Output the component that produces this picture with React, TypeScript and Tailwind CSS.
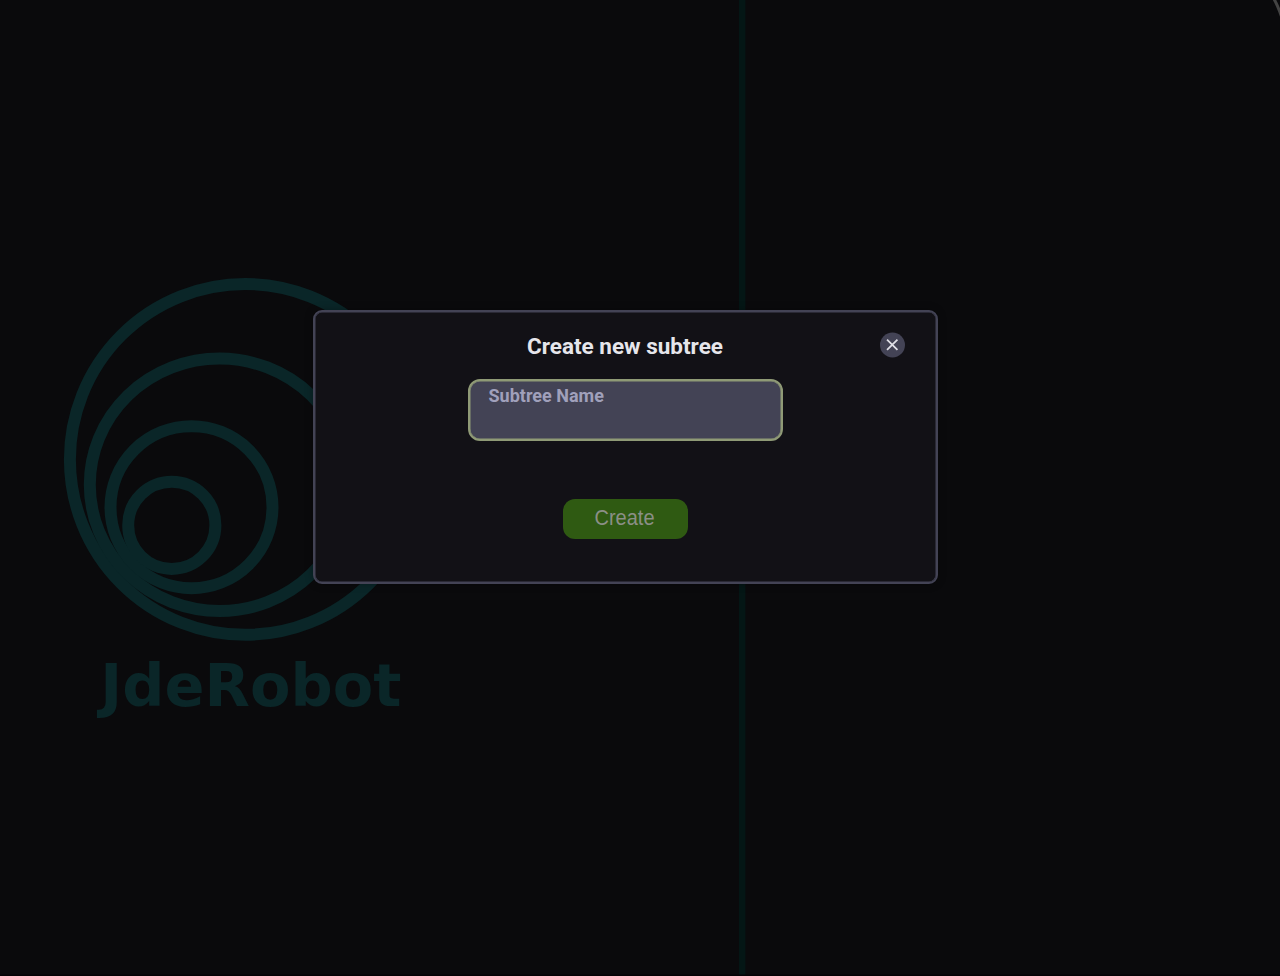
import React from "react";

function Backdrop() {
  return (
    <svg className="col-start-1 row-start-1 h-[976px] w-[1280px]" viewBox="0 0 1280 976" aria-hidden="true">
      <g fill="none" stroke="#0a2628" strokeWidth="12">
        <circle cx="245.3" cy="459.4" r="175.4" />
        <ellipse cx="219.6" cy="484.8" rx="129.8" ry="126.2" />
        <circle cx="191.5" cy="507.2" r="81" />
        <circle cx="171.8" cy="525.3" r="43.6" />
      </g>
      <text
        x="100.3"
        y="706"
        fill="#0a2628"
        fontSize="59"
        className="font-['DejaVu_Sans',sans-serif] font-bold"
      >
        JdeRobot
      </text>
      <rect x="739" y="0" width="6.4" height="976" fill="#041615" />
      <path d="M1274 -1Q1278 6 1282 18" fill="none" stroke="#434343" strokeWidth="3" />
      <rect x="0" y="974.5" width="1280" height="1.5" fill="#050306" />
    </svg>
  );
}

export default function App() {
  return (
    <main className="grid h-[976px] w-[1280px] overflow-hidden bg-[#0a0a0c]">
      <Backdrop />
      <div className="z-10 col-start-1 row-start-1 flex justify-center pt-[310px] pr-[29px]">
        <section
          role="dialog"
          aria-label="Create new subtree"
          className="flex h-[273.5px] w-[625px] flex-col items-center rounded-[9px] border-2 border-[#434355] bg-[#121116] shadow-[inset_0_0_0_0.5px_#434355,0_0_8px_rgba(0,0,0,0.3)]"
        >
          <header className="grid h-[67px] w-full grid-cols-[1fr_auto_1fr] items-center px-[31px] font-['Roboto',sans-serif]">
            <h1 className="col-start-2 -translate-x-[0.5px] scale-y-[1.02] text-[22.5px] leading-[26px] font-bold text-[#e6e6eb]">
              Create new subtree
            </h1>
            <button
              type="button"
              aria-label="Close"
              className="flex size-[25.5px] -translate-y-[0.5px] items-center justify-center justify-self-end rounded-full bg-[#434355]"
            >
              <svg className="size-[12.5px]" viewBox="0 0 12 12" aria-hidden="true">
                <path d="M1 1L11 11M11 1L1 11" stroke="#dedee5" strokeWidth="1.7" fill="none" />
              </svg>
            </button>
          </header>
          <label className="h-[62px] w-[315px] rounded-[12px] border-2 border-[#8f9a76] bg-[#434355] px-[18.5px] pt-[3.5px] font-['Roboto',sans-serif] text-[18px] leading-[22px] font-bold text-[#a0a0bb] shadow-[inset_0_0_0_0.5px_#8f9a76]">
            <span className="inline-block origin-center scale-y-[1.05]">Subtree Name</span>
          </label>
          <button
            type="button"
            className="mt-[58px] h-[40px] w-[125px] rounded-[12px] bg-[#2f5a12] pr-[2px] pb-[2px] font-['Liberation_Sans',sans-serif] text-[20px] text-[#8b8f86]"
          >
            <span className="inline-block scale-y-[1.07]">Create</span>
          </button>
        </section>
      </div>
    </main>
  );
}
